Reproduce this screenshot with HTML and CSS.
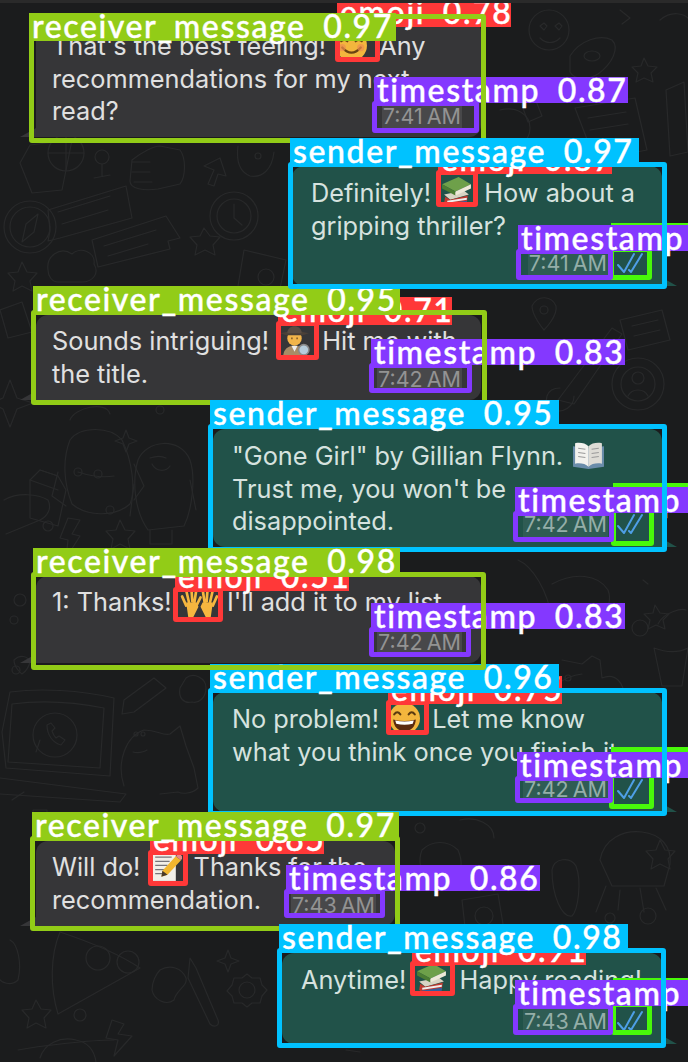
FILE: index.html
```html
<!DOCTYPE html>
<html lang="en">
<head>
<meta charset="utf-8">
<title>Chat detections</title>
<link rel="stylesheet" href="styles.css">
</head>
<body>
<svg class="defs" aria-hidden="true">
  <symbol id="books" viewBox="0 0 32 32">
    <path d="M4 18l19-4 5 4-18 5z" fill="#d8d4c4"/>
    <path d="M5 20l-1 6 3 3 19-3 1-7-17 4z" fill="#c0392f"/>
    <path d="M7 24l19-3v2l-19 3z" fill="#eee"/>
    <path d="M6 27l20-3v3l-19 3z" fill="#2f5f9e"/>
    <path d="M2 8l16-7 12 7-15 7z" fill="#6ea04a"/>
    <path d="M2 8l13 7v4L2 12z" fill="#4c7d33"/>
    <path d="M15 15l15-7v4l-15 7z" fill="#eee9d8"/>
  </symbol>
</svg>
<main class="chat">
  <svg class="wallpaper" viewBox="0 0 688 1062" aria-hidden="true">
    <g fill="none" stroke="#28292a" stroke-width="1.2" stroke-linejoin="round" stroke-linecap="round">
      <path d="M30 145l42-5-10 50-30 3-12-30z"/><circle cx="66" cy="153" r="18"/><path d="M66 135v36M48 153h36"/>
      <circle cx="102" cy="157" r="7"/><path d="M102 164v12M94 178l16-3"/>
      <path d="M132 160c10-8 22-14 28-14l20 4c6 8 6 26 0 34l-22 5c-14 2-28 0-28-8z"/><path d="M132 162h18M132 172h18M134 182h18"/>
      <path d="M208 184l6-14-10-4 16-8 6 18-8-2-4 12z"/>
      <path d="M238 146c-2 16 2 26 12 30 12 2 22-6 24-24"/><circle cx="258" cy="156" r="3"/>
      <circle cx="30" cy="227" r="26"/><circle cx="30" cy="227" r="20"/><path d="M38 214l-12 10-4 18 12-10z"/>
      <path d="M48 210l78-24 6 32-72 20-12 3 2-10z"/><path d="M58 212l52-16M62 224l46-14"/>
      <path d="M92 240l74-24 14 22-12 3 2 8-72 18z"/><path d="M104 246l52-16M108 256l40-12"/>
      <circle cx="234" cy="216" r="24"/><circle cx="234" cy="216" r="17"/><path d="M234 204v14l8 7"/>
      <path d="M204 228l6 8 10 1-7 8 2 10-10-5-10 5 2-10-7-8 10-1z"/>
      <path d="M244 250l42 10-8 38h-42z"/><circle cx="266" cy="277" r="8"/>
      <path d="M48 270c-2-14 12-24 24-16 8-8 24-2 22 10 6 10-2 18-12 18H58c-6 0-10-6-10-12z"/>
      <path d="M22 262l5 10 10 1-7 8 2 10-10-5-9 5 2-10-7-8 10-1z"/>
      <circle cx="549" cy="30" r="20"/><path d="M540 26l4-3 3 3-3 4zM555 26l4-3 3 3-3 4zM540 38c6 6 14 6 20 0"/>
      <path d="M570 56c10-16 30-22 42-16 8 8 0 24-14 34-10 6-24 6-28-2z"/><ellipse cx="592" cy="56" rx="8" ry="5"/>
      <path d="M644 58l4 8 9 1-6 6 2 9-9-4-8 4 2-9-6-6 9-1z"/>
      <path d="M666 90l18-8 4 70-18 4z"/><path d="M575 108l60-10 12 52-52 10z"/><path d="M588 118l38-6M590 130l38-6"/>
      <path d="M660 20c12-10 24-6 28-2M620 10l10 8-8 6M520 100l14-4 8 20-14 6z"/>
      <path d="M500 110c16-4 30 4 30 18s-14 22-26 18"/>
      <path d="M40 470l-10 10v38l28 8 8-36-8-14z"/><path d="M40 470l18 6M30 480l28 10"/>
      <path d="M70 440c10-14 40-14 52 0 10 20 14 50 8 64-16 14-44 12-58 0-8-20-10-44-2-64z"/><path d="M58 472l-6 24 14 10M134 464l10 22-10 14"/><path d="M78 472c12 4 24 6 36 4"/><circle cx="78" cy="472" r="4"/><circle cx="98" cy="474" r="4"/><path d="M70 420c4-12 36-20 40-6"/>
      <path d="M138 460c8-20 42-24 52 0 6 18 2 50-6 66l-36 4c-14-20-16-50-10-70z"/><path d="M150 458c6-2 12-2 16 0M152 464c4 8 14 8 18 2"/><path d="M134 484l-4 32M190 480l6 30M150 530v14h14M172 530v14h-10"/>
      <path d="M126 430l3 8 8 3-8 3-3 8-3-8-8-3 8-3z"/>
      <path d="M4 500c14-8 34-6 44 0 4 8 0 16-8 20l-34 14"/><path d="M68 518l12 2-8 14 8 2-14 22 2-18-8-2z"/>
      <path d="M120 520l5 10 10 1-7 8 2 10-10-5-9 5 2-10-7-8 10-1z"/><circle cx="48" cy="526" r="5"/><circle cx="110" cy="510" r="4"/>
      <path d="M532 306c6-12 20-10 24 0 2 10-12 24-12 24s-12-14-12-24z"/><circle cx="544" cy="310" r="4"/>
      <circle cx="638" cy="384" r="26"/><circle cx="638" cy="384" r="17"/><circle cx="638" cy="378" r="6"/><path d="M628 396c4-8 16-8 20 0"/>
      <path d="M558 400l54-72 10 6-48 70zM560 388c-14 0-18 14-8 22 12 4 22-4 22-14"/>
      <path d="M620 320l42-10 8 30-42 10z"/><path d="M632 326l26-6M634 336l26-6"/>
      <path d="M2 732l8-40c30-4 70-2 104 6l-4 78-104-8z"/><path d="M12 704c30-4 62-2 92 4l-4 60-92-6z"/><path d="M0 778l126 16-6 8L0 794"/>
      <circle cx="55" cy="735" r="22"/><path d="M36 752l4-12M47 725c0 10 6 18 14 20l4-5-6-4-3 2c-2-2-3-4-4-7l3-3-4-5z"/>
      <path d="M124 786c-8-24 2-50 20-56 14 0 18 6 26 4l10-8 6 20 8 22 4 20c-6 6-16 6-20 4l-18 2"/><circle cx="136" cy="734" r="2"/><circle cx="143" cy="734" r="2"/><path d="M133 752c8 2 14-2 14-2"/>
      <path d="M124 700l30-22 12 10-32 24-12 2z"/><path d="M186 678c8-6 20 0 20 10s-8 16-14 14c-8 2-14-4-12-14z"/>
      <path d="M12 800l12-8M33 810h14v14H33zM70 818l14 4"/>
      <path d="M562 660l20 4 10-8 8 4 2 18c14-6 22 6 22 18"/><path d="M544 708c4-20 20-32 38-34"/><circle cx="568" cy="678" r="3"/>
      <path d="M518 560c14 6 30 30 34 60M552 584c22-12 46-10 56 6 4 10 0 20-8 26"/><path d="M648 584l-5-4M655 605l5 8 9 1-6 6 2 9-9-4-8 4 2-9-6-6 9-1z"/>
      <path d="M658 624c6-12 24-16 28-14M654 648c16 6 26 4 34 0l-6 38h-20z"/><circle cx="640" cy="628" r="8"/>
      <path d="M60 932c24 8 56 20 80 36l-82 46c-8-26-8-58 2-82z"/><circle cx="98" cy="958" r="12"/><circle cx="128" cy="962" r="11"/>
      <path d="M10 940c8 4 12 24 8 40-6 6-18 4-20-4M36 1000l5 9 10 1-7 8 2 10-10-5-9 5 2-10-7-8 10-1z"/>
      <path d="M112 1020l12 4-6 10 14 2-18 20 4-16-12-2z"/><circle cx="80" cy="1015" r="6"/>
      <path d="M190 958l6 10 22 52c2 6-4 8-8 4l-22-46zM160 970c10-6 22-2 26 8 2 8-10 12-12 22-8 6-20 0-22-10 0-8 4-16 8-20z"/>
      <circle cx="247" cy="990" r="8"/><path d="M247 974l5 4 8 0 2 7 5 5-5 6-2 7-8 0-5 4-5-4-8 0-2-7-5-5 5-6 2-7 8 0z"/>
      <path d="M228 950l3 8 8 3-8 3-3 8-3-8-8-3 8-3z"/>
      <path d="M40 1058c4-14 20-22 36-18 10 2 18 8 20 22"/><path d="M18 1050c20-4 72-10 96-10"/>
      <path d="M600 860c4-22 24-30 42-28 18 2 30 14 28 32l-6 22h-52zM606 886l-10 26M656 888l10 22M620 890l-2 20M640 888l4 24"/>
      <path d="M552 870c2-12 18-14 24-4 6 16 2 44-4 50-10 2-20-20-20-46z"/><path d="M462 900l36-6 6 36-38 6z"/><circle cx="484" cy="916" r="9"/>
      <path d="M422 850c10-10 26-10 36 0 6 14 2 24-4 30h-26c-8-8-10-20-6-30zM460 820c16-4 34 4 34 18"/>
      <path d="M660 840l5 10 10 1-7 8 2 10-10-5-9 5 2-10-7-8 10-1z"/><path d="M650 1010c6-14 26-20 38-16"/>
      <path d="M346 1050l14 2"/><circle cx="420" cy="828" r="5"/><circle cx="610" cy="918" r="5"/><circle cx="648" cy="916" r="8"/>
      <circle cx="16" cy="670" r="4"/><circle cx="20" cy="600" r="6"/><circle cx="14" cy="620" r="4"/><path d="M14 660c6-6 14-4 16 2-2 8-8 12-8 12s-8-6-8-14z"/>
      <path d="M10 380l7 18 16 5-16 6-7 18-7-18-12-6 12-5z"/><path d="M0 310l22-8 10 30-24 6z"/>
      <circle cx="160" cy="410" r="4"/><circle cx="190" cy="880" r="4"/><circle cx="300" cy="920" r="4"/>
    </g>
  </svg>

  <article class="bubble received wide h-a">
    <p>That's the best feeling! <svg class="emoji" viewBox="0 0 32 32"><circle cx="16" cy="16" r="15" fill="#f3b63d"/><path d="M6 12q3-3 6 0M20 12q3-3 6 0" fill="none" stroke="#6a4312" stroke-width="2" stroke-linecap="round"/><path d="M7 18q9 10 18 0" fill="none" stroke="#6a4312" stroke-width="2.2" stroke-linecap="round"/><circle cx="7" cy="18" r="3.5" fill="#ee8d4e" opacity=".7"/><circle cx="25" cy="18" r="3.5" fill="#ee8d4e" opacity=".7"/></svg> Any<br>recommendations for my next<br>read?</p>
    <div class="meta"><time>7:41 AM</time></div>
  </article>

  <article class="bubble sent s-short h-b">
    <p>Definitely! <svg class="emoji"><use href="#books"/></svg> How about a<br>gripping thriller?</p>
    <div class="meta"><time>7:41 AM</time><svg class="ticks" viewBox="0 0 26 22"><path d="M1 13l6 7L17 2M12 18l2 2L25 2"/></svg></div>
  </article>

  <article class="bubble received wide h-c">
    <p>Sounds intriguing! <svg class="emoji" viewBox="0 0 32 32"><path d="M5 32c0-8 5-11 11-11s11 3 11 11z" fill="#a88c66"/><path d="M13 21l3 6 3-6z" fill="#eee"/><circle cx="16" cy="14" r="7" fill="#f2b54a"/><path d="M2 9q14-4 28 0l-6 2H8z" fill="#4a4038"/><path d="M9 9c0-9 14-9 14 0z" fill="#5a4e44"/><path d="M13 14h1M18 14h1" stroke="#4a3018" stroke-width="1.6"/><circle cx="25" cy="25" r="5" fill="#b6cddc" stroke="#8a8a8a" stroke-width="1.5"/></svg> Hit me with<br>the title.</p>
    <div class="meta"><time>7:42 AM</time></div>
  </article>

  <article class="bubble sent s-long h-d">
    <p>"Gone Girl" by Gillian Flynn. <svg class="emoji" viewBox="0 0 32 32"><path d="M1 7l15 2 15-2v20l-15 2-15-2z" fill="#6a8caa"/><path d="M3 4c5-1 10 0 13 3v20c-3-3-8-4-13-3z" fill="#f3f2ee"/><path d="M29 4c-5-1-10 0-13 3v20c3-3 8-4 13-3z" fill="#dedcd6"/><path d="M6 9l7 1M6 13l7 1M6 17l7 1M19 10l7-1M19 14l7-1M19 18l7-1" stroke="#9a9a9a"/></svg><br>Trust me, you won't be<br>disappointed.</p>
    <div class="meta"><time>7:42 AM</time><svg class="ticks" viewBox="0 0 26 22"><path d="M1 13l6 7L17 2M12 18l2 2L25 2"/></svg></div>
  </article>

  <article class="bubble received wide h-e">
    <p>1: Thanks! <svg class="emoji hands" viewBox="0 0 40 32"><g fill="none" stroke="#f5b63f" stroke-width="2.6" stroke-linecap="round"><path d="M3 11l4 9M7 5l3 13M12 2l1 14M17 4l-2 13M21 12l-4 8M37 11l-4 9M33 5l-3 13M28 2l-1 14M23 4l2 13"/></g><path d="M7 17h10l2 4-5 10H9zM33 17H23l-2 4 5 10h5z" fill="#f5b63f"/></svg> I'll add it to my list</p>
    <div class="meta"><time>7:42 AM</time></div>
  </article>

  <article class="bubble sent s-long h-f">
    <p>No problem! <svg class="emoji" viewBox="0 0 32 32"><circle cx="16" cy="16" r="15" fill="#f3b63d"/><path d="M6 12q3-4 6 0M20 12q3-4 6 0" fill="none" stroke="#5a3a10" stroke-width="2" stroke-linecap="round"/><path d="M5 17q11 3 22 0-1 11-11 11T5 17z" fill="#5a2a10"/><path d="M7 18q9 2 18 0l-1 3q-8 2-16 0z" fill="#fff"/></svg> Let me know<br>what you think once you finish it</p>
    <div class="meta"><time>7:42 AM</time><svg class="ticks" viewBox="0 0 26 22"><path d="M1 13l6 7L17 2M12 18l2 2L25 2"/></svg></div>
  </article>

  <article class="bubble received narrow h-g">
    <p>Will do! <svg class="emoji" viewBox="0 0 32 32"><path d="M3 2h23v28H3z" fill="#f2efe8"/><path d="M6 7h16M6 11h14M6 15h12M6 19h9M6 23h7" stroke="#77757a" stroke-width="1.2"/><path d="M12 26l1-6L26 6l5 4-13 14z" fill="#f2b62e"/><path d="M26 6l3-3 4 4-2 3z" fill="#e58a8a"/><path d="M12 26l1-6 5 4z" fill="#4a3a2a"/></svg> Thanks for the<br>recommendation.</p>
    <div class="meta"><time>7:43 AM</time></div>
  </article>

  <article class="bubble sent s-mid h-h">
    <p>Anytime! <svg class="emoji"><use href="#books"/></svg> Happy reading!</p>
    <div class="meta"><time>7:43 AM</time><svg class="ticks" viewBox="0 0 26 22"><path d="M1 13l6 7L17 2M12 18l2 2L25 2"/></svg></div>
  </article>

  <div class="detections">
    <div class="det emoji-det e1"><span class="tag">emoji 0.78</span></div>
    <div class="det time-det t1"><span class="tag">timestamp 0.87</span></div>
    <div class="det recv-det c97 m1"><span class="tag">receiver_message 0.97</span></div>

    <div class="det emoji-det e2"><span class="tag">emoji 0.87</span></div>
    <div class="det check-det k1"><span class="tag"></span></div>
    <div class="det time-det t2"><span class="tag">timestamp 0.87</span></div>
    <div class="det send-det c97 m2"><span class="tag">sender_message 0.97</span></div>

    <div class="det emoji-det e3"><span class="tag">emoji 0.71</span></div>
    <div class="det time-det t3"><span class="tag">timestamp 0.83</span></div>
    <div class="det recv-det c95 m3"><span class="tag">receiver_message 0.95</span></div>

    <div class="det check-det k2"><span class="tag"></span></div>
    <div class="det time-det t4"><span class="tag">timestamp 0.83</span></div>
    <div class="det send-det c95 m4"><span class="tag">sender_message 0.95</span></div>

    <div class="det emoji-det e5"><span class="tag">emoji 0.51</span></div>
    <div class="det time-det t5"><span class="tag">timestamp 0.83</span></div>
    <div class="det recv-det c98 m5"><span class="tag">receiver_message 0.98</span></div>

    <div class="det emoji-det e6"><span class="tag">emoji 0.75</span></div>
    <div class="det check-det k3"><span class="tag"></span></div>
    <div class="det time-det t6"><span class="tag">timestamp 0.83</span></div>
    <div class="det send-det c96 m6"><span class="tag">sender_message 0.96</span></div>

    <div class="det emoji-det e7"><span class="tag">emoji 0.85</span></div>
    <div class="det time-det t7"><span class="tag">timestamp 0.86</span></div>
    <div class="det recv-det c97 m7"><span class="tag">receiver_message 0.97</span></div>

    <div class="det emoji-det e8"><span class="tag">emoji 0.91</span></div>
    <div class="det check-det k4"><span class="tag"></span></div>
    <div class="det time-det t8"><span class="tag">timestamp 0.83</span></div>
    <div class="det send-det c98 m8"><span class="tag">sender_message 0.98</span></div>
  </div>
</main>
</body>
</html>
```
FILE: styles.css
```css
* { box-sizing: border-box; }
html, body { margin: 0; padding: 0; background: #1b1c1d; }
.defs { width: 0; height: 0; position: absolute; }

.chat {
  position: relative;
  width: 688px;
  height: 1062px;
  overflow: hidden;
  display: flex;
  flex-direction: column;
  gap: 29px;
  padding: 17px 26px 0 36px;
  border-top: 3px solid #2a2a2a;
  background: #1b1c1d;
  font-family: Inter, "Liberation Sans", sans-serif;
}
.wallpaper { position: absolute; left: 0; top: -3px; width: 688px; height: 1062px; }

/* message bubbles */
.bubble { position: relative; border-radius: 12px; flex: none; }
.bubble p { margin: 0; font-size: 25.3px; line-height: 32.5px; white-space: nowrap; }
.received { background: #363638; color: #e0e0e0; padding: 9px 16px; align-self: flex-start; border-bottom-left-radius: 0; }
.sent { background: #215249; color: #d6e2df; padding: 10px 19px; align-self: flex-end; border-bottom-right-radius: 0; }
.received::after, .sent::after { content: ""; position: absolute; bottom: 0; width: 16px; height: 9px; }
.received::after { left: -16px; background: #363638; clip-path: polygon(100% 0, 100% 100%, 0 100%); }
.sent::after { right: -15px; background: #215249; clip-path: polygon(0 0, 0 100%, 100% 100%); }

.wide { width: 445px; }
.narrow { width: 359px; }
.s-short { width: 370px; }
.s-long { width: 449px; }
.s-mid { width: 380px; }

.h-a { height: 117px; }
.h-b { height: 120px; }
.h-c { height: 85px; }
.h-d { height: 118px; }
.h-e { height: 87px; }
.h-f { height: 120px; }
.h-g { height: 85px; }
.h-h { height: 91px; margin-top: -2px; }

.emoji { width: 33px; height: 33px; vertical-align: -7px; margin: 0 4px 0 2px; }
.hands { width: 41px; margin: 0; }

/* time + delivery ticks in the bubble corner */
.meta { position: absolute; right: 19px; bottom: 8px; display: flex; align-items: center; gap: 9px; }
.meta time { font-size: 21.5px; line-height: 26px; word-spacing: -2px; color: #939393; background: #48484a; padding: 0 1px; }
.sent .meta { right: 19px; bottom: 10px; }
.sent .meta time { color: #94aea8; background: #2f5c54; }
.ticks { width: 26px; height: 22px; fill: none; stroke: #4e9fe6; stroke-width: 2; stroke-linecap: round; stroke-linejoin: round; }

/* detection overlay */
.detections { position: absolute; left: 0; top: -3px; width: 688px; height: 1062px; }
.det { position: absolute; border: 5px solid; border-radius: 3px; }
.tag {
  position: absolute;
  left: -3px;
  top: -29px;
  height: 28px;
  padding: 0 3px;
  white-space: nowrap;
  color: #fff;
  font: 500 32px/26px Lato, "Open Sans", sans-serif;
  letter-spacing: 1.6px;
  word-spacing: 8px;
  -webkit-text-stroke: 0.4px #fff;
}
.emoji-det { z-index: 1; border-color: #ff3838; }
.emoji-det .tag { background: #ff3838; width: 174px; }
.check-det { z-index: 2; border-color: #48f90a; }
.check-det .tag { background: #48f90a; width: 200px; }
.time-det { z-index: 3; border-color: #8438ff; }
.time-det .tag { background: #8438ff; width: 254px; height: 26px; }
.recv-det { border-color: #92cc17; }
.recv-det .tag { background: #92cc17; width: 367px; }
.send-det { border-color: #00c2ff; }
.send-det .tag { background: #00c2ff; width: 349px; }
.c95 { z-index: 4; }
.c96 { z-index: 5; }
.c97 { z-index: 6; }
.c98 { z-index: 7; }

/* detection coordinates, page space */
.m1 { left: 29px; top: 14px; width: 457px; height: 129px; }
.m1 .tag { left: -5px; top: -6px; }
.m2 { left: 288px; top: 162px; width: 379px; height: 127px; }
.m3 { left: 31px; top: 310px; width: 456px; height: 95px; }
.m4 { left: 208px; top: 424px; width: 459px; height: 128px; }
.m5 { left: 31px; top: 572px; width: 455px; height: 98px; }
.m6 { left: 208px; top: 688px; width: 459px; height: 128px; }
.m7 { left: 30px; top: 836px; width: 370px; height: 95px; }
.m8 { left: 277px; top: 948px; width: 389px; height: 100px; }

.e1 { left: 335px; top: 23px; width: 45px; height: 39px; }
.e2 { left: 436px; top: 170px; width: 42px; height: 37px; }
.e3 { left: 276px; top: 321px; width: 43px; height: 39px; }
.e5 { left: 173px; top: 587px; width: 50px; height: 35px; }
.e6 { left: 386px; top: 700px; width: 43px; height: 35px; }
.e7 { left: 148px; top: 850px; width: 40px; height: 36px; }
.e8 { left: 410px; top: 961px; width: 45px; height: 35px; }

.t1 { left: 372px; top: 101px; width: 107px; height: 32px; }
.t2 { left: 516px; top: 249px; width: 97px; height: 31px; }
.t3 { left: 369px; top: 363px; width: 103px; height: 30px; }
.t4 { left: 513px; top: 511px; width: 101px; height: 31px; }
.t5 { left: 369px; top: 627px; width: 102px; height: 30px; }
.t6 { left: 515px; top: 776px; width: 98px; height: 27px; }
.t7 { left: 284px; top: 889px; width: 101px; height: 29px; }
.t8 { left: 513px; top: 1004px; width: 100px; height: 31px; }

.k1 { left: 609px; top: 247px; width: 43px; height: 33px; }
.k2 { left: 611px; top: 507px; width: 43px; height: 39px; }
.k3 { left: 609px; top: 771px; width: 45px; height: 38px; }
.k4 { left: 611px; top: 1002px; width: 41px; height: 33px; }
```
